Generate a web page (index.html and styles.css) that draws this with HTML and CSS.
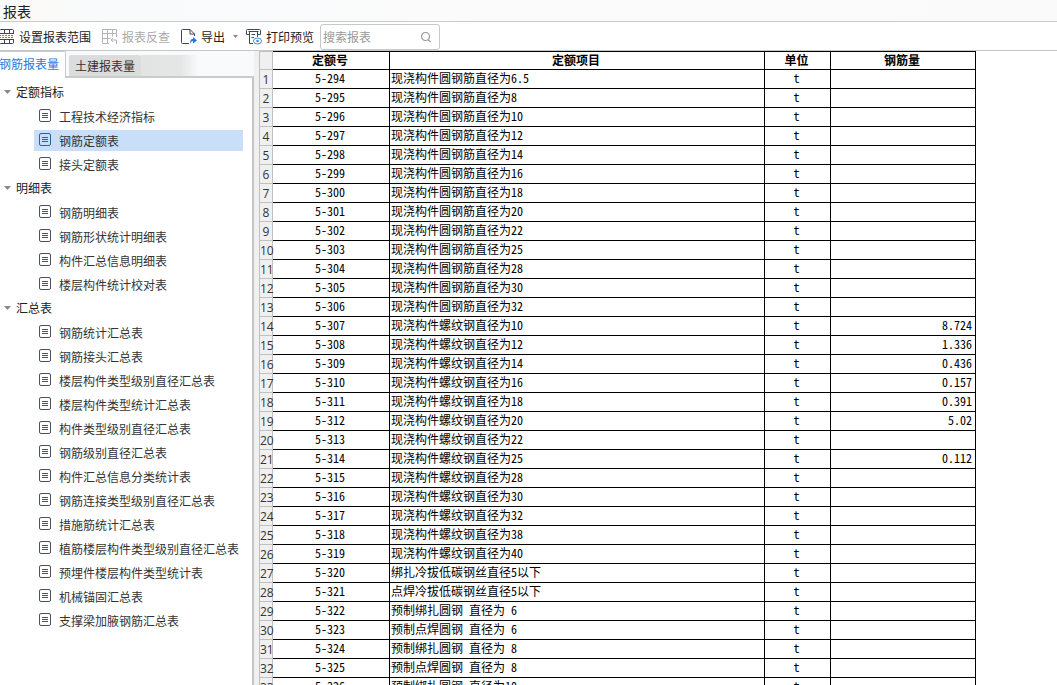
FILE: index.html
```html
<!DOCTYPE html>
<html lang="zh-CN">
<head>
<meta charset="utf-8">
<title>报表</title>
<link rel="stylesheet" href="styles.css">
</head>
<body>
<svg class="defs" aria-hidden="true">
  <symbol id="doc" viewBox="0 0 12 13"><rect x=".5" y=".5" width="11" height="12" rx="1.5" fill="none" stroke="currentColor"/><path d="M3 4.5h6M3 6.5h6M3 8.5h6" stroke="currentColor"/></symbol>
</svg>
<header class="titlebar"><h1>报表</h1></header>
<div class="toolbar">
  <button class="tool tool-range"><svg width="16" height="16" viewBox="0 0 16 16" fill="none"><rect x=".5" y=".5" width="14" height="14" rx="1" stroke="#3c4658"/><path d="M1 4.500h13M1 10.500h13M5.500 1v4M10.500 1v4M5.500 11v3M10.500 11v3" stroke="#3c4658"/><rect x="0" y="5" width="15" height="5" fill="#fff"/><path d="M0 6.500h15M0 8.500h15" stroke="#3f8ee8" stroke-dasharray="2 1"/></svg>设置报表范围</button>
  <button class="tool tool-check" disabled><svg width="16" height="16" viewBox="0 0 16 16" fill="none" stroke="#b4b4b4"><path d="M7 14.500H.5V.5h14V8M.5 4.500h14M.5 9.500h8M5.500 .5v14M10.500 .5v7"/><path d="M11 9l-2 2 2 2M9 11h5.500v4"/></svg>报表反查</button>
  <button class="tool tool-export"><svg width="16" height="16" viewBox="0 0 16 16" fill="none"><path d="M8 14.500H1.500a1 1 0 0 1-1-1v-12a1 1 0 0 1 1-1H9L13.500 5v2M9 .5V5h4.500" stroke="#3c4658"/><path d="M9 15c0-4 1-5 3-5V8l4 3.500-4 3V12c-1.500 0-2 1-3 3z" fill="#2878dc"/></svg>导出<svg class="caret" width="5" height="3" viewBox="0 0 5 3"><path d="M0 0h5L2.500 3z" fill="#888"/></svg></button>
  <button class="tool tool-print"><svg width="16" height="16" viewBox="0 0 16 16" fill="none"><path d="M3 5.500H.5v-4q0-1 1-1h12q1 0 1 1v4H12M2.500 2.500h10M3.500 3v11.500H7M11.500 3v5M5.500 5.500H9M5.500 8.500H8" stroke="#3c4658"/><ellipse cx="11.500" cy="12" rx="4" ry="3" stroke="#3f8ee8" fill="#fff"/><circle cx="11.500" cy="12" r="1.300" fill="#3f8ee8"/></svg>打印预览</button>
  <label class="search"><input type="text" placeholder="搜索报表" aria-label="搜索报表"><svg width="12" height="12" viewBox="0 0 12 12" fill="none" stroke="#999" stroke-width="1.200"><circle cx="5.500" cy="5.500" r="4"/><path d="M8 8.500l2.500 2.500"/></svg></label>
</div>
<div class="main">
  <aside class="side">
    <div class="tabs"><button class="tab active">钢筋报表量</button><button class="tab">土建报表量</button><span class="tab-shade"></span></div>
    <nav class="tree" id="tree"></nav>
  </aside>
  <section class="sheet">
    <table>
      <colgroup><col class="c-no"><col class="c-code"><col class="c-item"><col class="c-unit"><col class="c-qty"></colgroup>
      <thead><tr><th class="no"></th><th>定额号</th><th>定额项目</th><th>单位</th><th>钢筋量</th></tr></thead>
      <tbody id="rows"></tbody>
    </table>
  </section>
</div>
<script src="script.js"></script>
</body>
</html>
```
FILE: styles.css
```css
* { box-sizing: border-box; }
body {
  margin: 0;
  height: 100vh;
  display: flex;
  flex-direction: column;
  overflow: hidden;
  background: #fff;
  color: #222;
  font: 12px/16px "Noto Sans CJK SC", sans-serif;
}
button, input { font: inherit; color: inherit; }
button { border: 0; padding: 0; background: none; white-space: nowrap; }
.defs { position: absolute; width: 0; height: 0; }

.titlebar {
  flex: none;
  height: 22px;
  padding: 1px 3px 0;
  border-bottom: 1px solid #c8cacc;
  background: linear-gradient(90deg, #fcfaf7, #f8fafc 12%, #fbfbfb 40%, #fafafa);
}
h1 { margin: 0; font-size: 14px; font-weight: 400; line-height: 20px; }

.toolbar {
  flex: none;
  display: flex;
  align-items: center;
  height: 29px;
  padding-top: 1px;
  border-bottom: 1px solid #c4c6ca;
}
.tool { display: flex; align-items: center; gap: 4px; height: 24px; margin-right: 11px; }
.tool-range { margin-left: -1px; }
.tool-check { color: #aaa; }
.tool-export { margin-right: 8px; }
.caret { margin-left: 4px; }
.tool-print { margin-right: 6px; }
.search {
  display: flex;
  align-items: center;
  width: 120px;
  height: 26px;
  padding: 0 7px 0 2px;
  border: 1px solid #c8c8c8;
  border-radius: 3px;
}
.search input { flex: 1; min-width: 0; border: 0; padding: 0; outline: 0; background: none; }
.search input::placeholder { color: #999; opacity: 1; }

.main { flex: 1; min-height: 0; display: flex; }
.side { flex: none; width: 254px; display: flex; flex-direction: column; }
.tabs {
  flex: none;
  display: flex;
  align-items: flex-end;
  height: 27px;
  border-bottom: 2px solid #c8cccd;
  background: #f8fafc;
}
.tab { height: 21px; margin-left: 3px; padding: 0 6px; background: #dcdcdc; border-radius: 2px 2px 0 0; color: #333; }
.tab.active {
  height: 27px;
  margin: 0 0 -2px -1px;
  padding: 0 6px 2px 0;
  border: solid #c8cccd;
  border-width: 1px 1px 0 0;
  background: #fff;
  color: #1e7be0;
}
.tab-shade { width: 58px; height: 21px; background: linear-gradient(90deg, #e3e3e3, #e6e6e6 70%, #f8fafc); }
.tree { flex: 1; display: flex; flex-direction: column; padding: 2px 9px 0 0; border-right: 2px solid #c4c4c4; }
.group { flex: none; display: flex; align-items: center; gap: 5px; height: 24px; padding-left: 4px; }
.leaf {
  flex: none;
  display: flex;
  align-items: center;
  gap: 8px;
  height: 21px;
  margin: 1px 0 2px 34px;
  padding-left: 5px;
  color: #333;
  text-decoration: none;
  white-space: nowrap;
}
.group + .leaf { margin-top: 2px; }
.leaf:has(+ .group) { margin-bottom: 1px; }
.leaf svg { flex: none; margin-bottom: 2px; color: #4a5263; }
.leaf.selected { background: #c9dff9; }
.leaf.selected svg { color: #315f96; }

.sheet { flex: 1; min-width: 0; overflow: hidden; padding-left: 5px; background: linear-gradient(90deg, #f0f0f0 5px, #fff 5px); }
table { width: 717px; table-layout: fixed; border-collapse: separate; border-spacing: 0; color: #000; }
.c-no { width: 14px; }
.c-code { width: 117px; }
.c-item { width: 375px; }
.c-unit { width: 66px; }
.c-qty { width: 145px; }
th, td {
  height: 19px;
  padding: 0 3px 2px 1px;
  border: solid #000;
  border-width: 0 1px 1px 0;
  line-height: 16px;
  text-align: center;
  white-space: pre;
  font-feature-settings: "hwid";
}
thead th { border-top-width: 1px; padding-bottom: 1px; font-weight: 700; }
td.item { text-align: left; }
td.qty { text-align: right; }
th.no {
  padding: 1px 0 0;
  border-color: #c0c0c0;
  border-left: 1px solid #c0c0c0;
  background: #f0f0f0;
  color: #333;
  font: 12px/16px "Open Sans", sans-serif;
}
```
FILE: script.js
```js
const groups = [
  ["定额指标", ["工程技术经济指标", "钢筋定额表", "接头定额表"]],
  ["明细表", ["钢筋明细表", "钢筋形状统计明细表", "构件汇总信息明细表", "楼层构件统计校对表"]],
  ["汇总表", ["钢筋统计汇总表", "钢筋接头汇总表", "楼层构件类型级别直径汇总表", "楼层构件类型统计汇总表",
    "构件类型级别直径汇总表", "钢筋级别直径汇总表", "构件汇总信息分类统计表", "钢筋连接类型级别直径汇总表",
    "措施筋统计汇总表", "植筋楼层构件类型级别直径汇总表", "预埋件楼层构件类型统计表", "机械锚固汇总表", "支撑梁加腋钢筋汇总表"]]
];
document.getElementById("tree").innerHTML = groups.map(([name, leaves]) =>
  `<div class="group"><svg width="7" height="4" viewBox="0 0 7 4"><path d="M0 0h7L3.5 4z" fill="#888"/></svg>${name}</div>` +
  leaves.map(t => `<a href="#" class="leaf${t === "钢筋定额表" ? " selected" : ""}"><svg width="12" height="13"><use href="#doc"/></svg>${t}</a>`).join("")
).join("");

const items = [
  ...["6.5", 8, 10, 12, 14, 16, 18, 20, 22, 25, 28, 30, 32].map(d => "现浇构件圆钢筋直径为" + d),
  ...[10, 12, 14, 16, 18, 20, 22, 25, 28, 30, 32, 38, 40].map(d => "现浇构件螺纹钢直径为" + d),
  "绑扎冷拔低碳钢丝直径5以下", "点焊冷拔低碳钢丝直径5以下",
  "预制绑扎圆钢 直径为 6", "预制点焊圆钢 直径为 6",
  "预制绑扎圆钢 直径为 8", "预制点焊圆钢 直径为 8", "预制绑扎圆钢 直径为10"
];
const qty = { 307: "8.724", 308: "1.336", 309: "0.436", 310: "0.157", 311: "0.391", 312: "5.02", 314: "0.112" };
document.getElementById("rows").innerHTML = items.map((t, i) =>
  `<tr><th class="no">${i + 1}</th><td>5-${294 + i}</td><td class="item">${t}</td><td>t</td><td class="qty">${qty[294 + i] || ""}</td></tr>`
).join("");
```
